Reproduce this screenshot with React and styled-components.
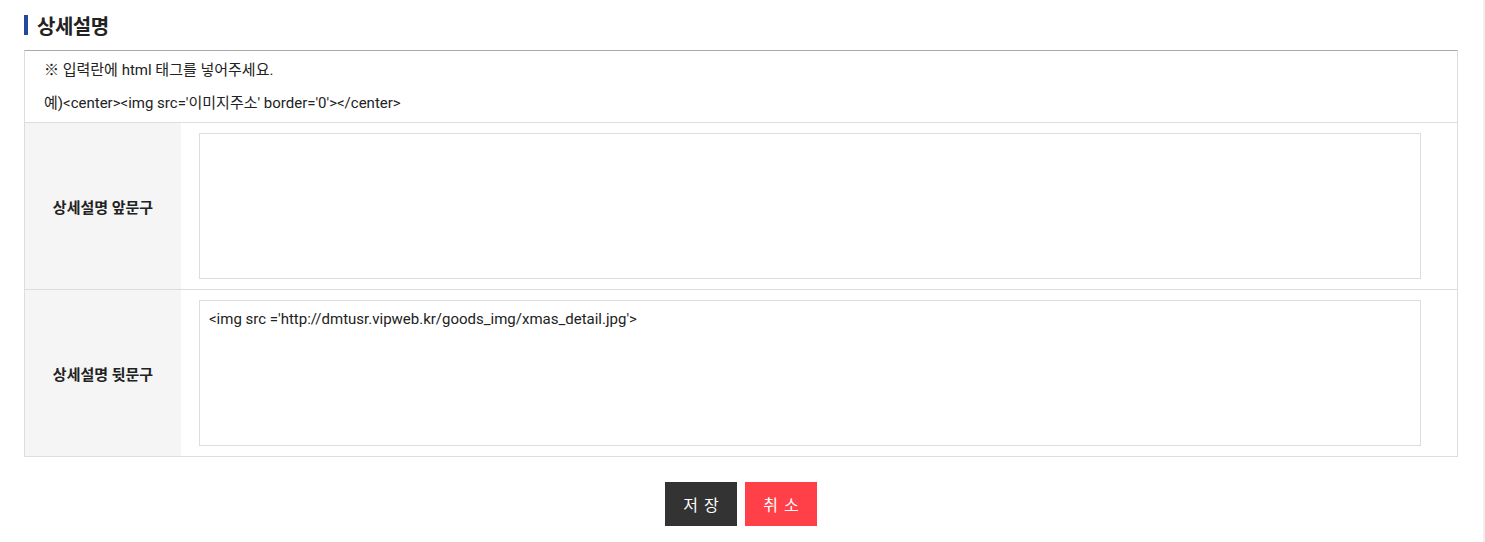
import React from 'react';
import styled, { createGlobalStyle } from 'styled-components';

const GlobalStyle = createGlobalStyle`
    html, body {
        margin: 0;
        padding: 0;
        background: #fff;
    }
    body {
        font-family: Roboto, "Noto Sans CJK KR", sans-serif;
        color: #222;
    }
`;

const Page = styled.div`
    width: 1485px;
    min-height: 542px;
    border-right: 2px solid #f0f0f0;
    padding: 12px 25px 0 24px;
    box-sizing: border-box;
`;

const Title = styled.h2`
    margin: 0 0 12px;
    display: flex;
    align-items: center;
    height: 26px;
    font-size: 20px;
    font-weight: 700;
    color: #222;
    letter-spacing: -0.5px;

    &::before {
        content: '';
        width: 4px;
        height: 20px;
        background: #1e4b9c;
        margin-right: 9px;
    }
`;

const Table = styled.div`
    border: 1px solid #ddd;
    border-top: 1px solid #a9a9a9;
`;

const Info = styled.div`
    padding: 8px 19px 8px;
    border-bottom: 1px solid #ddd;
    font-size: 15px;
    color: #222;
`;

const InfoLine = styled.p`
    margin: 0;
    line-height: 22px;
    & + & {
        margin-top: 11px;
    }
`;

const Row = styled.div`
    display: flex;
    & + & {
        border-top: 1px solid #ddd;
    }
`;

const Label = styled.div`
    width: 156px;
    flex-shrink: 0;
    background: #f5f5f5;
    display: flex;
    align-items: center;
    justify-content: center;
    font-size: 15px;
    font-weight: 700;
    color: #222;
`;

const Cell = styled.div`
    flex: 1;
    padding: 10px 18px;
`;

const TextArea = styled.textarea`
    display: block;
    width: 1222px;
    height: 146px;
    box-sizing: border-box;
    border: 1px solid #ddd;
    padding: 8px 9px;
    resize: none;
    font-family: Roboto, "Noto Sans CJK KR", sans-serif;
    font-size: 15px;
    line-height: 20px;
    color: #222;
    outline: none;
`;

const Buttons = styled.div`
    display: flex;
    justify-content: center;
    gap: 8px;
    margin-top: 25px;
`;

const Button = styled.button`
    width: 72px;
    height: 44px;
    border: 0;
    background: ${p => p.bg};
    color: #fff;
    font-family: Roboto, "Noto Sans CJK KR", sans-serif;
    font-size: 16px;
    letter-spacing: 6px;
    padding: 0 0 0 6px;
    cursor: pointer;
`;

export default function App() {
    return (
        <Page>
            <GlobalStyle />
            <Title>상세설명</Title>
            <Table>
                <Info>
                    <InfoLine>※ 입력란에 html 태그를 넣어주세요.</InfoLine>
                    <InfoLine>예)&lt;center&gt;&lt;img src='이미지주소' border='0'&gt;&lt;/center&gt;</InfoLine>
                </Info>
                <Row>
                    <Label>상세설명 앞문구</Label>
                    <Cell>
                        <TextArea defaultValue="" />
                    </Cell>
                </Row>
                <Row>
                    <Label>상세설명 뒷문구</Label>
                    <Cell>
                        <TextArea defaultValue="<img src ='http://dmtusr.vipweb.kr/goods_img/xmas_detail.jpg'>" />
                    </Cell>
                </Row>
            </Table>
            <Buttons>
                <Button bg="#333333">저장</Button>
                <Button bg="#ff4048">취소</Button>
            </Buttons>
        </Page>
    );
}
